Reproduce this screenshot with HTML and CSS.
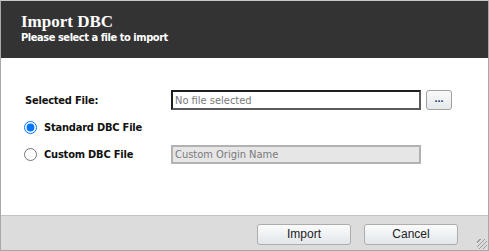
FILE: index.html
```html
<!DOCTYPE html>
<html lang="en">
<head>
  <meta charset="UTF-8" />
  <title>Import DBC</title>
  <link rel="stylesheet" href="styles.css">
</head>
<body>
  <div class="dialog">
    <header class="dialog-head">
      <h1>Import DBC</h1>
      <p>Please select a file to import</p>
    </header>

    <main class="dialog-body">
      <div class="row">
        <label class="label">Selected File:</label>
        <input type="text" class="field field-file" placeholder="No file selected" readonly>
        <button class="browse">...</button>
      </div>
      <div class="row">
        <label class="radio-label"><input type="radio" name="kind" checked> Standard DBC File</label>
      </div>
      <div class="row">
        <label class="radio-label"><input type="radio" name="kind"> Custom DBC File</label>
        <input type="text" class="field field-custom" placeholder="Custom Origin Name" disabled>
      </div>
    </main>

    <footer class="dialog-foot">
      <button class="btn">Import</button>
      <button class="btn">Cancel</button>
      <span class="grip"></span>
    </footer>
  </div>
</body>
</html>
```

FILE: styles.css
```css
body {
  margin: 0;
  font-family: 'DejaVu Sans Condensed', 'DejaVu Sans', sans-serif;
  background: white;
}

.dialog {
  width: 489px;
  height: 251px;
  box-sizing: border-box;
  border: 1px solid #a8a8a8;
  border-top-color: #c8c8c8;
  display: flex;
  flex-direction: column;
  position: relative;
}

.dialog-head {
  height: 57px;
  box-sizing: border-box;
  background: #333333;
  color: white;
  padding: 11px 20px 0;
}

.dialog-head h1 {
  margin: 0;
  font-family: 'Liberation Serif', serif;
  font-size: 17px;
  font-weight: bold;
  line-height: 19px;
}

.dialog-head p {
  margin: 0;
  font-size: 11px;
  font-weight: bold;
  letter-spacing: -0.45px;
  line-height: 13px;
}

.dialog-body {
  flex: 1;
  padding: 32px 0 0 22px;
  display: flex;
  flex-direction: column;
  gap: 7px;
}

.row {
  display: flex;
  align-items: center;
  height: 20px;
  font-size: 11px;
  font-weight: bold;
  letter-spacing: -0.2px;
  color: #111;
}

.label {
  width: 148px;
  padding-left: 2px;
  box-sizing: border-box;
}

.radio-label {
  width: 148px;
  display: flex;
  align-items: center;
  gap: 7px;
}

.radio-label input {
  margin: 0 0 0 1px;
  width: 13px;
  height: 13px;
}

.field {
  width: 250px;
  height: 20px;
  box-sizing: border-box;
  padding: 0 2px;
  font-family: 'DejaVu Sans Condensed', 'DejaVu Sans', sans-serif;
  font-size: 11px;
  letter-spacing: 0;
  outline: none;
}

.field::placeholder {
  color: #7a7a7a;
}

.field-file {
  border: 2px solid;
  border-color: #1e1e1e #5a5a5a #5a5a5a #1e1e1e;
  background: white;
}

.field-custom {
  border: 2px solid #b2b2b2;
  background: #e6e6e6;
  height: 19px;
}

.browse {
  margin-left: 5px;
  width: 26px;
  height: 20px;
  padding: 0 0 4px;
  border: 1px solid #a0a0a0;
  border-radius: 3px;
  background: linear-gradient(#fafafa, #e4e8ec);
  font-size: 11px;
  font-weight: bold;
  color: #1a3a6a;
}

.dialog-foot {
  height: 35px;
  box-sizing: border-box;
  border-top: 1px solid #c4c4c4;
  background: #dcdcdc;
  display: flex;
  justify-content: flex-end;
  align-items: center;
  gap: 13px;
  padding: 2px 30px 0 0;
}

.btn {
  width: 94px;
  height: 21px;
  border: 1px solid #adadad;
  border-radius: 3px;
  background: linear-gradient(#fbfbfb, #e2e7eb);
  font-family: 'Liberation Sans', Arial, sans-serif;
  font-size: 12px;
  color: #222;
}

.grip {
  position: absolute;
  right: 1px;
  bottom: 1px;
  width: 10px;
  height: 10px;
  background: repeating-linear-gradient(135deg, transparent 0 2px, #9a9a9a 2px 3px);
}
```
